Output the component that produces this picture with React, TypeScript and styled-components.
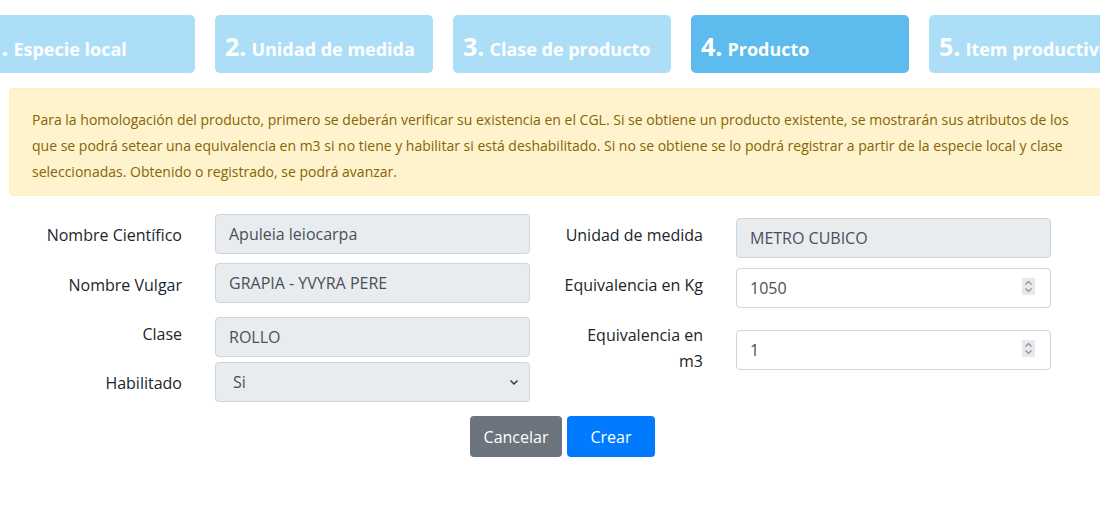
import React from "react";
import styled, { createGlobalStyle } from "styled-components";

const GlobalStyle = createGlobalStyle`
  html, body { margin: 0; padding: 0; background: #fff; overflow: hidden; }
  body { font-family: "Open Sans", "Noto Sans", sans-serif; color: #212529; }
  * { box-sizing: border-box; }
`;

const Page = styled.div`
  width: 1107px;
  margin-left: 9px;
  padding-top: 15px;
`;

const StepsRow = styled.div`
  display: flex;
  gap: 20px;
  margin-left: -32px;
`;

const Step = styled.div<{ $active?: boolean }>`
  flex: 0 0 218px;
  height: 58px;
  border-radius: 5px;
  background: ${(p) => (p.$active ? "#5dbbee" : "#addef7")};
  color: #fff;
  font-weight: bold;
  display: flex;
  align-items: baseline;
  padding: 16px 10px 0;
  white-space: nowrap;
  overflow: hidden;
`;

const StepNum = styled.span`
  font-size: 25px;
  line-height: 30px;
  margin-right: 5px;
`;

const StepTitle = styled.span`
  font-size: 18px;
`;

const Alert = styled.div`
  margin-top: 15px;
  background: #fff3cd;
  border: 1px solid #ffeeba;
  border-radius: 4px;
  color: #856404;
  font-size: 14px;
  line-height: 26px;
  padding: 18px 22px 10px;
`;

const Form = styled.div`
  display: flex;
  gap: 23px;
  margin-top: 18px;
  padding-left: 23px;
`;

const Column = styled.div<{ $top?: number }>`
  display: flex;
  flex-direction: column;
  margin-top: ${(p) => p.$top ?? 0}px;
`;

const Row = styled.div<{ $mt: number }>`
  display: grid;
  grid-template-columns: 150px 315px;
  column-gap: 33px;
  align-items: start;
  margin-top: ${(p) => p.$mt}px;
`;

const Label = styled.label<{ $pt: number; $lh?: number }>`
  text-align: right;
  font-size: 16px;
  line-height: ${(p) => p.$lh ?? 24}px;
  padding-top: ${(p) => p.$pt}px;
  color: #212529;
  white-space: nowrap;
`;

const FieldWrap = styled.div<{ $mt?: number }>`
  position: relative;
  margin-top: ${(p) => p.$mt ?? 0}px;
`;

const Input = styled.input<{ $disabled?: boolean }>`
  display: block;
  width: 100%;
  height: 40px;
  border: 1px solid #ced4da;
  border-radius: 4px;
  background: ${(p) => (p.$disabled ? "#e9ecef" : "#fff")};
  color: #495057;
  font-family: inherit;
  font-size: 16px;
  padding: 0 13px;
  outline: none;
`;

const SelectBox = styled.div`
  height: 40px;
  border: 1px solid #ced4da;
  border-radius: 4px;
  background: #e9ecef;
  color: #495057;
  font-size: 16px;
  display: flex;
  align-items: center;
  justify-content: space-between;
  padding: 0 10px 0 17px;
`;

const Spinner = styled.div`
  position: absolute;
  right: 16px;
  top: 10px;
  width: 13px;
  height: 17px;
  background: #e8e8ed;
  display: flex;
  align-items: center;
  justify-content: center;
`;

const Buttons = styled.div`
  display: flex;
  justify-content: center;
  gap: 5px;
  margin-top: 14px;
`;

const Button = styled.button<{ $variant: "secondary" | "primary" }>`
  height: 41px;
  border: none;
  border-radius: 4px;
  color: #fff;
  font-family: inherit;
  font-size: 16px;
  background: ${(p) => (p.$variant === "primary" ? "#007bff" : "#6c757d")};
  width: ${(p) => (p.$variant === "primary" ? 88 : 92)}px;
  padding: 0;
`;

const SpinIcon = () => (
  <svg width="9" height="13" viewBox="0 0 9 13" fill="none" stroke="#8a8a95" strokeWidth="1.1">
    <path d="M1.5 4.5 L4.5 1.5 L7.5 4.5" />
    <path d="M1.5 8.5 L4.5 11.5 L7.5 8.5" />
  </svg>
);

const Chevron = () => (
  <svg width="10" height="7" viewBox="0 0 10 7" fill="none" stroke="#343a40" strokeWidth="1.5">
    <path d="M1.5 1.5 L5 5 L8.5 1.5" />
  </svg>
);

export default function App() {
  const steps = [
    { n: "1.", t: "Especie local" },
    { n: "2.", t: "Unidad de medida" },
    { n: "3.", t: "Clase de producto" },
    { n: "4.", t: "Producto", active: true },
    { n: "5.", t: "Item productivo" },
  ];
  return (
    <>
      <GlobalStyle />
      <Page>
        <StepsRow>
          {steps.map((s) => (
            <Step key={s.n} $active={s.active}>
              <StepNum>{s.n}</StepNum>
              <StepTitle>{s.t}</StepTitle>
            </Step>
          ))}
        </StepsRow>
        <Alert>
          Para la homologación del producto, primero se deberán verificar su existencia en el CGL. Si se obtiene un
          producto existente, se mostrarán sus atributos de los que se podrá setear una equivalencia en m3 si no tiene y
          habilitar si está deshabilitado. Si no se obtiene se lo podrá registrar a partir de la especie local y clase
          seleccionadas. Obtenido o registrado, se podrá avanzar.
        </Alert>
        <Form>
          <Column>
            <Row $mt={0}>
              <Label $pt={9}>Nombre Científico</Label>
              <FieldWrap>
                <Input $disabled readOnly value="Apuleia leiocarpa" />
              </FieldWrap>
            </Row>
            <Row $mt={9}>
              <Label $pt={10}>Nombre Vulgar</Label>
              <FieldWrap>
                <Input $disabled readOnly value="GRAPIA - YVYRA PERE" />
              </FieldWrap>
            </Row>
            <Row $mt={14}>
              <Label $pt={5}>Clase</Label>
              <FieldWrap>
                <Input $disabled readOnly value="ROLLO" />
              </FieldWrap>
            </Row>
            <Row $mt={5}>
              <Label $pt={9}>Habilitado</Label>
              <FieldWrap>
                <SelectBox>
                  <span>Si</span>
                  <Chevron />
                </SelectBox>
              </FieldWrap>
            </Row>
          </Column>
          <Column $top={4}>
            <Row $mt={0}>
              <Label $pt={5}>Unidad de medida</Label>
              <FieldWrap>
                <Input $disabled readOnly value="METRO CUBICO" />
              </FieldWrap>
            </Row>
            <Row $mt={10}>
              <Label $pt={5}>Equivalencia en Kg</Label>
              <FieldWrap>
                <Input readOnly value="1050" />
                <Spinner>
                  <SpinIcon />
                </Spinner>
              </FieldWrap>
            </Row>
            <Row $mt={14}>
              <Label $pt={0} $lh={26}>
                Equivalencia en
                <br />
                m3
              </Label>
              <FieldWrap $mt={8}>
                <Input readOnly value="1" />
                <Spinner>
                  <SpinIcon />
                </Spinner>
              </FieldWrap>
            </Row>
          </Column>
        </Form>
        <Buttons>
          <Button $variant="secondary">Cancelar</Button>
          <Button $variant="primary">Crear</Button>
        </Buttons>
      </Page>
    </>
  );
}
